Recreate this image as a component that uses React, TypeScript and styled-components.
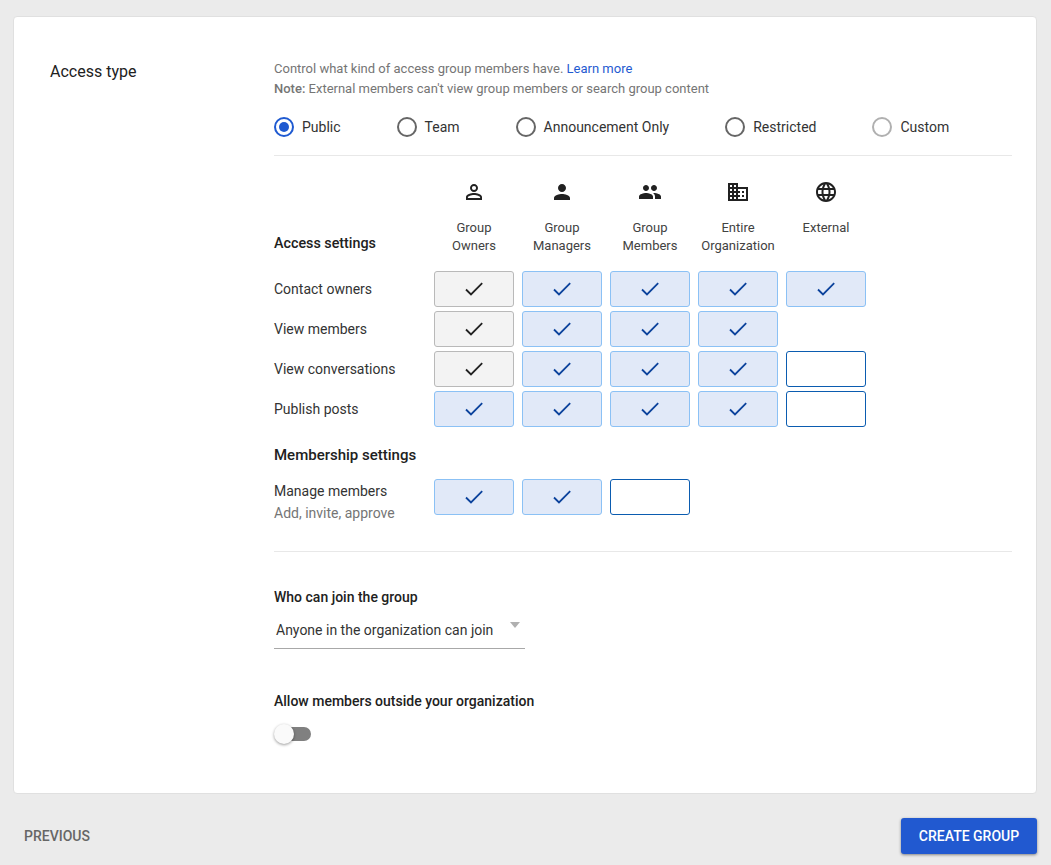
import * as React from 'react';
import styled, { createGlobalStyle } from 'styled-components';
import { MdPersonOutline, MdPerson, MdPeople, MdDomain, MdLanguage } from 'react-icons/md';

const GlobalStyle = createGlobalStyle`
  html, body {
    margin: 0;
    padding: 0;
    background: #ebebeb;
    font-family: Roboto, 'Liberation Sans', sans-serif;
    color: #212121;
  }
`;
const Page = styled.div`
  box-sizing: border-box;
  height: 865px;
  padding: 16px 14px 0 13px;
`;
const Card = styled.div`
  box-sizing: border-box;
  height: 778px;
  background: #fff;
  border: 1px solid #e0e0e0;
  border-radius: 4px;
  padding: 43px 24px 0 36px;
  display: flex;
`;
const SectionName = styled.div`
  width: 224px;
  flex-shrink: 0;
  font-size: 16px;
  line-height: 24px;
`;
const Content = styled.div`
  flex: 1;
  min-width: 0;
`;
const Description = styled.div`
  font-size: 13px;
  line-height: 20px;
  color: #757575;
  margin-top: -1px;
  b {
    font-weight: 500;
  }
  a {
    color: #1f5ad1;
    text-decoration: none;
  }
`;
const RadioRow = styled.div`
  display: flex;
  gap: 56px;
  margin-top: 18px;
  padding: 0 0 18px;
  border-bottom: 1px solid #e8e8e8;
`;
const RadioItem = styled.label`
  display: flex;
  align-items: center;
  gap: 8px;
  font-size: 14px;
  line-height: 20px;
  color: #333;
`;
const RadioCircle = styled.span<{ $checked?: boolean; $disabled?: boolean }>`
  box-sizing: border-box;
  width: 20px;
  height: 20px;
  border-radius: 50%;
  border: 2px solid ${({ $checked, $disabled }) => ($checked ? '#1f5ad1' : $disabled ? '#b0b0b0' : '#666')};
  display: flex;
  align-items: center;
  justify-content: center;
  &::after {
    content: '';
    display: ${({ $checked }) => ($checked ? 'block' : 'none')};
    width: 10px;
    height: 10px;
    border-radius: 50%;
    background: #1f5ad1;
  }
`;
const Matrix = styled.div`
  display: grid;
  grid-template-columns: 152px repeat(5, 80px);
  column-gap: 8px;
  row-gap: 4px;
`;
const HeaderRow = styled(Matrix)`
  margin-top: 24px;
  margin-bottom: 11px;
  align-items: end;
`;
const HeaderCell = styled.div`
  display: flex;
  flex-direction: column;
  align-items: center;
  height: 80px;
  font-size: 13px;
  line-height: 18px;
  text-align: center;
  color: #424242;
  white-space: nowrap;
  svg {
    color: #212121;
    margin-bottom: 15px;
  }
`;
const GroupTitle = styled.div<{ $size: number }>`
  font-size: ${({ $size }) => $size}px;
  font-weight: 500;
  line-height: 20px;
  color: #212121;
`;
const AccessTitle = styled(GroupTitle)`
  margin-bottom: 7px;
`;
const RowLabel = styled.div`
  font-size: 14px;
  line-height: 36px;
  color: #333;
`;
const Membership = styled.div`
  margin-top: 18px;
`;
const MemberLabel = styled.div`
  font-size: 14px;
  line-height: 22px;
  margin-top: 1px;
  color: #333;
  small {
    display: block;
    font-size: 14px;
    color: #757575;
  }
`;
const MemberRow = styled(Matrix)`
  margin-top: 14px;
  padding-bottom: 27px;
  border-bottom: 1px solid #e8e8e8;
`;
const PermBox = styled.div<{ $kind: 'locked' | 'on' | 'off' }>`
  box-sizing: border-box;
  height: 36px;
  border-radius: 3px;
  display: flex;
  align-items: center;
  justify-content: center;
  border: 1px solid ${({ $kind }) => ($kind === 'locked' ? '#b9b9b9' : $kind === 'on' ? '#8bc1f5' : '#0b5cb0')};
  background: ${({ $kind }) => ($kind === 'locked' ? '#f3f3f3' : $kind === 'on' ? '#e1e9f8' : '#fff')};
  color: ${({ $kind }) => ($kind === 'locked' ? '#212121' : '#0b429c')};
`;
const FieldLabel = styled.div`
  font-size: 14px;
  font-weight: 500;
  line-height: 20px;
  color: #212121;
`;
const JoinLabel = styled(FieldLabel)`
  margin-top: 35px;
`;
const Select = styled.div`
  position: relative;
  width: 251px;
  height: 41px;
  box-sizing: border-box;
  margin-top: 1px;
  padding: 12px 0 0 2px;
  border-bottom: 1px solid #a8a8a8;
  font-size: 14px;
  line-height: 20px;
  color: #333;
  &::after {
    content: '';
    position: absolute;
    right: 5px;
    top: 14px;
    border-left: 5.5px solid transparent;
    border-right: 5.5px solid transparent;
    border-top: 6px solid #b0b0b0;
  }
`;
const OutsideLabel = styled(FieldLabel)`
  margin-top: 42px;
`;
const ToggleWrap = styled.div`
  position: relative;
  width: 38px;
  height: 20px;
  margin-top: 13px;
  display: flex;
  align-items: center;
`;
const ToggleTrack = styled.div`
  width: 35px;
  height: 14px;
  margin-left: 2px;
  border-radius: 7px;
  background: #808080;
`;
const ToggleKnob = styled.div`
  position: absolute;
  left: 0;
  top: 0;
  width: 20px;
  height: 20px;
  border-radius: 50%;
  background: #fafafa;
  box-shadow: 0 1px 3px rgba(0, 0, 0, 0.4);
`;
const Footer = styled.div`
  display: flex;
  align-items: center;
  justify-content: space-between;
  margin-top: 24px;
  padding-left: 11px;
`;
const PrevButton = styled.div`
  font-size: 14px;
  font-weight: 500;
  color: #666;
`;
const CreateButton = styled.div`
  box-sizing: border-box;
  width: 136px;
  height: 36px;
  border-radius: 3px;
  background: #2159d0;
  color: #fff;
  font-size: 14px;
  font-weight: 500;
  display: flex;
  align-items: center;
  justify-content: center;
  box-shadow: 0 1px 3px rgba(0, 0, 0, 0.45);
`;

type Kind = 'locked' | 'on' | 'off' | null;

const radios = [
  { label: 'Public', checked: true },
  { label: 'Team' },
  { label: 'Announcement Only' },
  { label: 'Restricted' },
  { label: 'Custom', disabled: true },
];
const columns: [React.ReactNode, string[]][] = [
  [<MdPersonOutline size={24} />, ['Group', 'Owners']],
  [<MdPerson size={24} />, ['Group', 'Managers']],
  [<MdPeople size={24} />, ['Group', 'Members']],
  [<MdDomain size={24} />, ['Entire', 'Organization']],
  [<MdLanguage size={24} />, ['External']],
];
const rows: [string, Kind[]][] = [
  ['Contact owners', ['locked', 'on', 'on', 'on', 'on']],
  ['View members', ['locked', 'on', 'on', 'on', null]],
  ['View conversations', ['locked', 'on', 'on', 'on', 'off']],
  ['Publish posts', ['on', 'on', 'on', 'on', 'off']],
];

function Check() {
  return (
    <svg width="18" height="14" viewBox="0 0 18 14" fill="none" stroke="currentColor" strokeWidth="1.8">
      <path d="M1 7.5 L6 12.5 L17.2 1.2" />
    </svg>
  );
}

function Perm({ kind }: { kind: Kind }) {
  if (!kind) return <div />;
  return <PermBox $kind={kind}>{kind !== 'off' && <Check />}</PermBox>;
}

export default function App() {
  return (
    <Page>
      <GlobalStyle />
      <Card>
        <SectionName>Access type</SectionName>
        <Content>
          <Description>
            Control what kind of access group members have. <a href="#learn">Learn more</a>
            <br />
            <b>Note:</b> External members can't view group members or search group content
          </Description>
          <RadioRow>
            {radios.map((r) => (
              <RadioItem key={r.label}>
                <RadioCircle $checked={r.checked} $disabled={r.disabled} />
                {r.label}
              </RadioItem>
            ))}
          </RadioRow>
          <HeaderRow>
            <AccessTitle $size={14.3}>Access settings</AccessTitle>
            {columns.map(([icon, lines]) => (
              <HeaderCell key={lines.join(' ')}>
                {icon}
                {lines.map((l) => <span key={l}>{l}</span>)}
              </HeaderCell>
            ))}
          </HeaderRow>
          <Matrix>
            {rows.map(([label, kinds]) => (
              <React.Fragment key={label}>
                <RowLabel>{label}</RowLabel>
                {kinds.map((k, i) => <Perm key={i} kind={k} />)}
              </React.Fragment>
            ))}
          </Matrix>
          <Membership>
            <GroupTitle $size={15}>Membership settings</GroupTitle>
            <MemberRow>
              <MemberLabel>
                Manage members
                <small>Add, invite, approve</small>
              </MemberLabel>
              <Perm kind="on" />
              <Perm kind="on" />
              <Perm kind="off" />
            </MemberRow>
          </Membership>
          <JoinLabel>Who can join the group</JoinLabel>
          <Select>Anyone in the organization can join</Select>
          <OutsideLabel>Allow members outside your organization</OutsideLabel>
          <ToggleWrap>
            <ToggleTrack />
            <ToggleKnob />
          </ToggleWrap>
        </Content>
      </Card>
      <Footer>
        <PrevButton>PREVIOUS</PrevButton>
        <CreateButton>CREATE GROUP</CreateButton>
      </Footer>
    </Page>
  );
}
